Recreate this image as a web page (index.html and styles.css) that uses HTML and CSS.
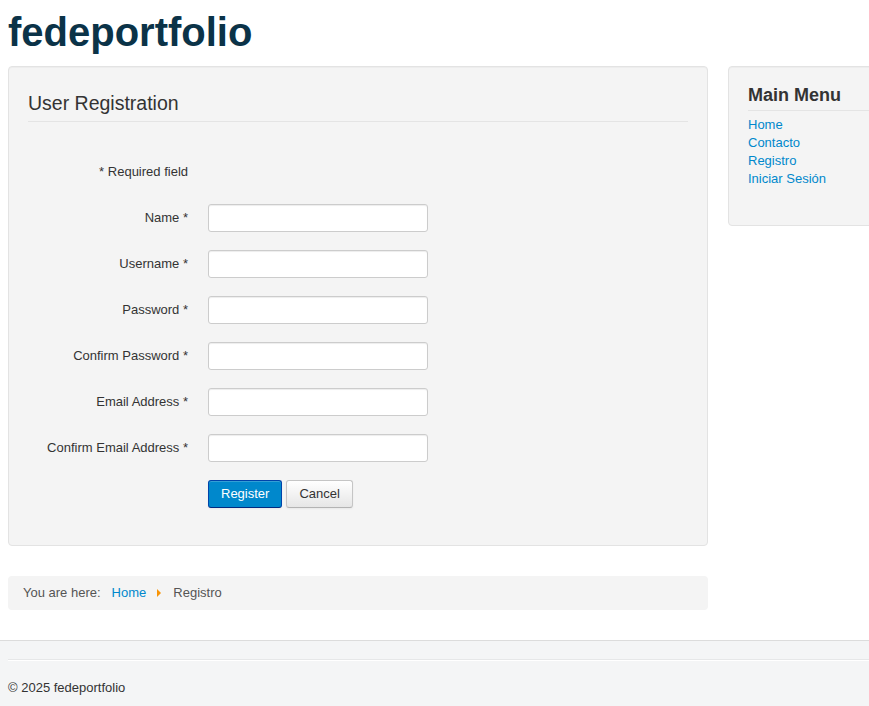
FILE: index.html
```html
<!DOCTYPE html>
<html lang="en">
<head>
<meta charset="utf-8">
<title>Registro - fedeportfolio</title>
<link rel="stylesheet" href="styles.css">
</head>
<body>
<div class="site">
  <header class="header">
    <a class="brand" href="#">fedeportfolio</a>
  </header>
  <div class="row">
    <main class="main">
      <div class="well">
        <div class="page-header"><h2>User Registration</h2></div>
        <form class="form">
          <div class="req-row"><span class="label">* Required field</span></div>
          <div class="group"><label class="label">Name *</label><input class="input" type="text"></div>
          <div class="group"><label class="label">Username *</label><input class="input" type="text"></div>
          <div class="group"><label class="label">Password *</label><input class="input" type="password"></div>
          <div class="group"><label class="label">Confirm Password *</label><input class="input" type="password"></div>
          <div class="group"><label class="label">Email Address *</label><input class="input" type="email"></div>
          <div class="group"><label class="label">Confirm Email Address *</label><input class="input" type="email"></div>
          <div class="actions">
            <button type="button" class="btn btn-primary">Register</button>
            <button type="button" class="btn">Cancel</button>
          </div>
        </form>
      </div>
      <nav class="breadcrumb">
        <span class="here">You are here:</span>
        <a href="#" class="crumb-link">Home</a>
        <span class="divider"></span>
        <span class="crumb-current">Registro</span>
      </nav>
    </main>
    <aside class="sidebar">
      <div class="well side-well">
        <h3 class="side-header">Main Menu</h3>
        <ul class="menu">
          <li><a href="#">Home</a></li>
          <li><a href="#">Contacto</a></li>
          <li><a href="#">Registro</a></li>
          <li><a href="#">Iniciar Sesión</a></li>
        </ul>
      </div>
    </aside>
  </div>
</div>
<footer class="footer">
  <hr class="foot-hr">
  <p class="copy">© 2025 fedeportfolio</p>
</footer>
</body>
</html>
```

FILE: styles.css
```css
html, body {
  overflow-x: hidden;
}
body {
  margin: 0;
  font-family: "Liberation Sans", Arial, Helvetica, sans-serif;
  font-size: 13px;
  line-height: 18px;
  color: #333;
  background: #fff;
}
a {
  color: #0088cc;
  text-decoration: none;
}
.site {
  padding: 0 8px;
}
.header {
  height: 66px;
}
.brand {
  display: inline-block;
  font-size: 40px;
  font-weight: bold;
  line-height: 48px;
  color: #0b3348;
  padding-top: 8px;
}
.row {
  display: flex;
  gap: 20px;
  width: 940px;
}
.main {
  width: 700px;
  flex: none;
}
.sidebar {
  width: 220px;
  flex: none;
}
.well {
  background: #f4f4f4;
  border: 1px solid #e3e3e3;
  border-radius: 4px;
  padding: 19px;
  box-shadow: inset 0 1px 1px rgba(0,0,0,0.03);
}
.page-header {
  border-bottom: 1px solid #e4e4e4;
  padding-bottom: 4px;
  margin-top: 3px;
}
.page-header h2 {
  margin: 0;
  font-size: 19.5px;
  font-weight: normal;
  line-height: 28px;
  color: #333;
}
.form {
  margin-top: 41px;
}
.req-row {
  display: flex;
  height: 18px;
  margin-bottom: 23px;
}
.label {
  width: 160px;
  flex: none;
  text-align: right;
  line-height: 18px;
}
.group {
  display: flex;
  align-items: center;
  gap: 20px;
  height: 28px;
  margin-bottom: 18px;
}
.input {
  box-sizing: border-box;
  width: 220px;
  height: 28px;
  margin: 0;
  padding: 4px 6px;
  background: #fff;
  border: 1px solid #ccc;
  border-radius: 3px;
  box-shadow: inset 0 1px 1px rgba(0,0,0,0.075);
  font: inherit;
}
.actions {
  margin-left: 180px;
  display: flex;
  gap: 4px;
  margin-bottom: 18px;
}
.btn {
  box-sizing: border-box;
  height: 28px;
  padding: 4px 12px;
  font-family: inherit;
  font-size: 13px;
  line-height: 18px;
  color: #333;
  background: linear-gradient(#ffffff, #e6e6e6);
  border: 1px solid #c5c5c5;
  border-bottom-color: #b3b3b3;
  border-radius: 3px;
  box-shadow: inset 0 1px 0 rgba(255,255,255,0.2), 0 1px 2px rgba(0,0,0,0.05);
}
.btn-primary {
  color: #fff;
  background: #0088cc;
  border-color: #0044aa #0044aa #002a80;
}
.breadcrumb {
  margin-top: 30px;
  background: #f4f4f4;
  border-radius: 4px;
  padding: 8px 15px;
  line-height: 18px;
  display: flex;
  align-items: center;
}
.here {
  color: #555;
  margin-right: 11px;
}
.divider {
  width: 0;
  height: 0;
  border-left: 4px solid #f89406;
  border-top: 4px solid transparent;
  border-bottom: 4px solid transparent;
  margin: 0 12px 0 11px;
}
.crumb-current {
  color: #555;
}
.side-header {
  margin: 0;
  font-size: 18px;
  line-height: 18px;
  font-weight: bold;
  color: #333;
  padding-bottom: 6px;
  border-bottom: 1px solid #e4e4e4;
}
.menu {
  list-style: none;
  margin: 5px 0 18px;
  padding: 0;
}
.menu li {
  line-height: 18px;
}
.footer {
  margin-top: 30px;
  border-top: 1px solid #dcdcdc;
  background: #f4f5f6;
  padding: 18px 0 11px 8px;
}
.foot-hr {
  margin: 0 0 18px;
  border: 0;
  border-top: 1px solid #e6e7e8;
  border-bottom: 1px solid #fff;
}
.copy {
  margin: 0;
  color: #333;
}
```
